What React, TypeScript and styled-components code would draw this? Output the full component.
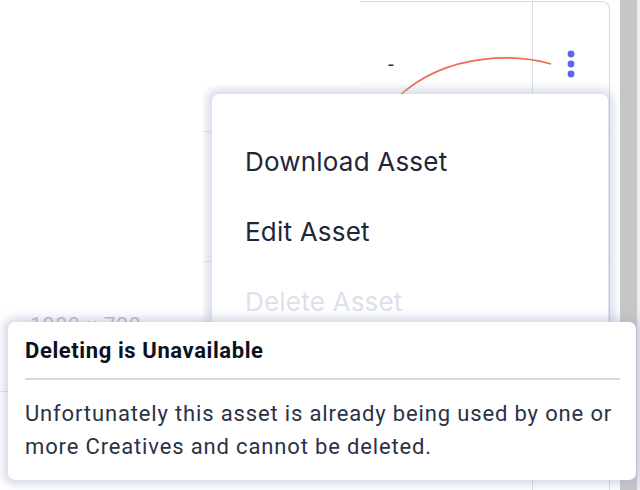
import React from 'react';
import styled, { createGlobalStyle } from 'styled-components';

const GlobalStyle = createGlobalStyle`
    html, body {
        margin: 0;
        padding: 0;
        background: #ffffff;
    }

    body {
        font-family: Inter, "Noto Sans", sans-serif;
    }
`;

const Page = styled.div`
    position: relative;
    display: flex;
    width: 640px;
    height: 490px;
    overflow: hidden;
    background: #ffffff;
`;

const TableArea = styled.div`
    width: 620px;
    padding-top: 1px;
    padding-right: 10px;
    box-sizing: border-box;
`;

const Scrollbar = styled.div`
    width: 17px;
    background: #c6c6c6;
`;

const ScrollEdge = styled.div`
    flex: 1;
    background: #ececec;
`;

const Card = styled.div`
    height: 560px;
    border-top: 1px solid #d6dae4;
    border-right: 1px solid #d6dae4;
    border-top-right-radius: 8px;
    background: #ffffff;
`;

const Row = styled.div<{ $lift?: number }>`
    display: grid;
    grid-template-columns: 340px 192px 1fr;
    height: 130px;
    box-sizing: border-box;
    padding-bottom: ${p => p.$lift ?? 0}px;
    border-bottom: 1px solid #e2e5ed;
`;

const Cell = styled.div<{ $pad?: number }>`
    display: flex;
    align-items: center;
    padding-left: ${p => p.$pad ?? 0}px;
    font-family: Roboto, "Liberation Sans", sans-serif;
    font-size: 21px;
    color: #2b3245;
`;

const MutedCell = styled(Cell)`
    align-items: flex-start;
    padding-top: 51px;
    color: #b3b8c3;
    letter-spacing: 0.8px;
`;

const ActionCell = styled.div`
    display: flex;
    align-items: center;
    justify-content: center;
    border-left: 1.5px solid #d9dde6;
`;

const Mask = styled.div<{ $w: number; $h: number; $top?: number }>`
    position: absolute;
    left: 0;
    top: ${p => p.$top ?? 0}px;
    width: ${p => p.$w}px;
    height: ${p => p.$h}px;
    background: #ffffff;
    z-index: 3;
`;

const Annotation = styled.svg`
    position: absolute;
    left: 0;
    top: 0;
    width: 640px;
    height: 490px;
    z-index: 1;
    pointer-events: none;
`;

const Menu = styled.div`
    position: absolute;
    left: 212px;
    top: 94px;
    width: 396px;
    height: 260px;
    display: flex;
    flex-direction: column;
    padding: 43px 0 0 33px;
    box-sizing: border-box;
    gap: 21px;
    background: #ffffff;
    border-radius: 7px;
    box-shadow: 0 0 10px 5px rgba(165, 176, 205, 0.45);
    z-index: 2;
`;

const MenuItem = styled.div<{ $disabled?: boolean }>`
    height: 49px;
    display: flex;
    align-items: center;
    font-family: Inter, "Noto Sans", sans-serif;
    font-size: 26px;
    letter-spacing: 0.2px;
    color: ${p => (p.$disabled ? '#dde1ea' : '#1f2639')};
`;

const Tooltip = styled.div`
    position: absolute;
    left: 8px;
    top: 322px;
    width: 628px;
    height: 158px;
    box-sizing: border-box;
    padding: 16px 16px 0 17px;
    background: #ffffff;
    border-radius: 7px;
    box-shadow: 0 0 10px 4px rgba(165, 176, 205, 0.5);
    z-index: 4;
    font-family: Roboto, "Liberation Sans", sans-serif;
`;

const TooltipTitle = styled.div`
    font-size: 22px;
    font-weight: 700;
    letter-spacing: 0.6px;
    line-height: 26px;
    color: #0c1122;
    padding-bottom: 14px;
    border-bottom: 2px solid #d5d9e2;
`;

const TooltipBody = styled.div`
    padding-top: 17px;
    font-size: 22px;
    letter-spacing: 0.85px;
    line-height: 33px;
    color: #2b3245;
`;

const Kebab = () => (
    <svg width="8" height="28" viewBox="0 0 8 28">
        <circle cx="4" cy="4" r="3.4" fill="#5865f2" />
        <circle cx="4" cy="14" r="3.4" fill="#5865f2" />
        <circle cx="4" cy="24" r="3.4" fill="#5865f2" />
    </svg>
);

export default function App() {
    return (
        <>
            <GlobalStyle />
            <Page>
                <TableArea>
                    <Card>
                        <Row $lift={5}>
                            <Cell $pad={30} />
                            <Cell $pad={48}>-</Cell>
                            <ActionCell>
                                <Kebab />
                            </ActionCell>
                        </Row>
                        <Row>
                            <Cell />
                            <Cell />
                            <ActionCell />
                        </Row>
                        <Row>
                            <MutedCell $pad={30}>1080 x 720</MutedCell>
                            <Cell />
                            <ActionCell />
                        </Row>
                        <Row>
                            <Cell />
                            <Cell />
                            <ActionCell />
                        </Row>
                    </Card>
                </TableArea>
                <Scrollbar />
                <ScrollEdge />

                <Mask $w={360} $h={85} />
                <Mask $w={203} $h={230} $top={85} />

                <Annotation viewBox="0 0 640 490">
                    <path
                        d="M551 64 C 520 55, 450 50, 399 96"
                        fill="none"
                        stroke="#f26a4f"
                        strokeWidth="1.6"
                    />
                </Annotation>

                <Menu>
                    <MenuItem>Download Asset</MenuItem>
                    <MenuItem>Edit Asset</MenuItem>
                    <MenuItem $disabled>Delete Asset</MenuItem>
                </Menu>

                <Tooltip>
                    <TooltipTitle>Deleting is Unavailable</TooltipTitle>
                    <TooltipBody>
                        Unfortunately this asset is already being used by one or more Creatives and cannot be deleted.
                    </TooltipBody>
                </Tooltip>
            </Page>
        </>
    );
}
